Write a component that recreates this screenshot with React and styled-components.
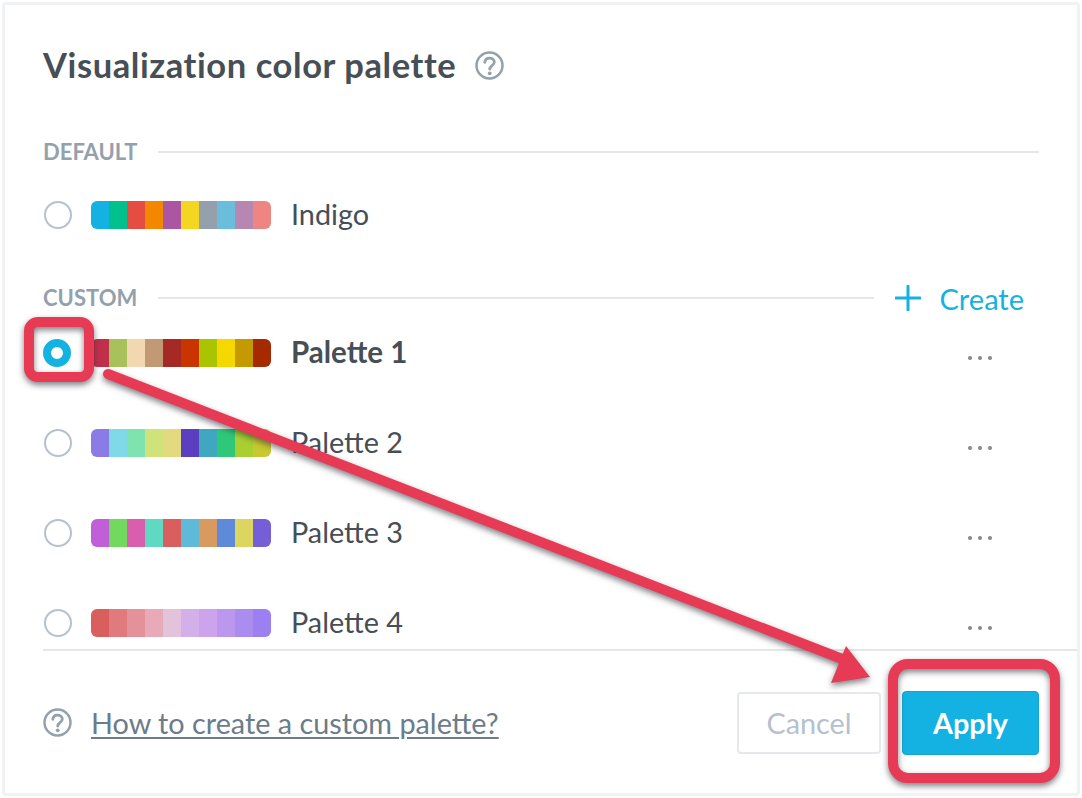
import React from 'react'
import styled, { createGlobalStyle } from 'styled-components'

const GlobalStyle = createGlobalStyle`
    html, body {
        margin: 0;
        padding: 0;
        background: #fff;
        font-family: Lato, "Open Sans", sans-serif;
    }
`

const Page = styled.div`
    position: relative;
    width: 1082px;
    height: 798px;
    overflow: hidden;
    padding: 2px 0 0 2px;
    box-sizing: border-box;
`

const Panel = styled.div`
    width: 1078px;
    height: 794px;
    box-sizing: border-box;
    border: 3px solid #f1f2f3;
    border-radius: 4px;
    padding: 38px 0 0 38px;
    color: #464e56;
`

const Body = styled.div`
    padding-right: 38px;
`

const TitleRow = styled.div`
    display: flex;
    align-items: center;
    height: 44px;
    gap: 19px;
`

const Title = styled.h1`
    margin: 0;
    font-size: 34.5px;
    font-weight: 700;
    line-height: 44px;
    letter-spacing: 0.58px;
    color: #464e56;
`

const SectionHead = styled.div`
    display: flex;
    align-items: center;
    height: 20px;
    margin-top: ${p => p.$top}px;
`

const SectionLabel = styled.span`
    font-size: 22px;
    font-weight: 700;
    color: #94a1ad;
    line-height: 20px;
`

const SectionLine = styled.span`
    flex: 1;
    height: 2px;
    margin-left: 21px;
    background: #e4e7ea;
`

const CreateLink = styled.a`
    display: flex;
    align-items: center;
    gap: 19px;
    margin: 0 15px 0 21px;
    font-size: 29px;
    color: #14b2e2;
`

const Rows = styled.div`
    display: flex;
    flex-direction: column;
    gap: 40px;
    margin-top: ${p => p.$top}px;
`

const Row = styled.div`
    display: flex;
    align-items: center;
    height: 50px;
`

const Radio = styled.span`
    width: 28px;
    height: 28px;
    box-sizing: border-box;
    border-radius: 50%;
    margin-left: ${p => (p.$checked ? 0 : 1)}px;
    margin-right: ${p => (p.$checked ? 20 : 19)}px;
    background: #fff;
    border: ${p => (p.$checked ? '8.5px solid #14b2e2' : '2px solid #b5c1cf')};
`

const Swatches = styled.div`
    display: flex;
    width: 180px;
    height: 28px;
    border-radius: 6px;
    overflow: hidden;
`

const Swatch = styled.span`
    flex: 1;
    background: ${p => p.$color};
`

const Name = styled.span`
    margin-left: 20px;
    padding-bottom: 3px;
    font-size: ${p => (p.$bold ? 29.5 : 28.8)}px;
    font-weight: ${p => (p.$bold ? 700 : 400)};
    color: #464e56;
`

const Dots = styled.div`
    display: flex;
    gap: 6px;
    margin: 10px 47px 0 auto;
`

const Dot = styled.span`
    width: 4px;
    height: 4px;
    border-radius: 50%;
    background: #83888d;
`

const Footer = styled.div`
    display: flex;
    align-items: center;
    margin-top: 1px;
    height: 143px;
    padding-right: 38px;
    border-top: 2px solid #e4e7ea;
`

const HelpLink = styled.a`
    margin-left: 19px;
    font-size: 28.8px;
    color: #6c7c89;
    text-decoration: underline;
    text-underline-offset: 3px;
`

const Actions = styled.div`
    display: flex;
    align-items: center;
    gap: 21px;
    margin-left: auto;
`

const Button = styled.button`
    box-sizing: border-box;
    width: ${p => (p.$primary ? 137 : 144)}px;
    height: ${p => (p.$primary ? 64 : 62)}px;
    border-radius: 4px;
    border: ${p => (p.$primary ? '1px solid #12a5d2' : '2px solid #e6e9ec')};
    background: ${p => (p.$primary ? '#14b2e2' : '#fff')};
    color: ${p => (p.$primary ? '#fff' : '#b5c1cf')};
    font-family: inherit;
    font-size: 28.8px;
    font-weight: ${p => (p.$primary ? 700 : 400)};
`

const Overlay = styled.svg`
    position: absolute;
    left: 0;
    top: 0;
    pointer-events: none;
    filter: drop-shadow(0 3px 3px rgba(40, 40, 50, 0.6));
`

const HelpIcon = () => (
    <svg width="29" height="29" viewBox="0 0 29 29" fill="none">
        <circle cx="14.5" cy="14.5" r="13" stroke="#94a1ad" strokeWidth="2.500" />
        <path d="M9.800 11.400c.2-2.700 2.200-4.300 4.800-4.300 2.700 0 4.700 1.600 4.700 4 0 3.600-4.400 3.500-4.600 7" stroke="#94a1ad" strokeWidth="2.800" strokeLinecap="round" />
        <circle cx="14.700" cy="22.300" r="1.900" fill="#94a1ad" />
    </svg>
)

const PlusIcon = () => (
    <svg width="26" height="26" viewBox="0 0 26 26" fill="none">
        <path d="M13 1v24M1 13h24" stroke="#14b2e2" strokeWidth="3" strokeLinecap="round" />
    </svg>
)

const custom = [
    {
        name: 'Palette 1',
        checked: true,
        colors: ['#c1304a', '#a9c15a', '#f2d7b0', '#c19a75', '#a52a26', '#c93400', '#aac400', '#f5d800', '#c49a00', '#a52a00'],
    },
    {
        name: 'Palette 2',
        colors: ['#8b7be6', '#7fd9e6', '#7fe3b0', '#cfe37a', '#e3d97f', '#5b3fc0', '#3fa8c0', '#2fc878', '#a8d030', '#c8c830'],
    },
    {
        name: 'Palette 3',
        colors: ['#c15fd9', '#72d95f', '#d95fae', '#5fd9c1', '#d95f5f', '#5fb9d9', '#d99a5f', '#5f8ad9', '#dbd65f', '#745fd9'],
    },
    {
        name: 'Palette 4',
        colors: ['#d95f5f', '#e07a7d', '#e5919a', '#e8a9b8', '#e3c3dc', '#d4b0ea', '#cba4ec', '#bb98ee', '#ab8df0', '#9b7ff3'],
    },
]

const indigo = ['#14b2e2', '#00c18d', '#e54d42', '#f38700', '#ab55a3', '#f4d521', '#94a1ad', '#6bbedb', '#b587b1', '#ef8582']

const PaletteRow = ({ name, colors, checked, more }) => (
    <Row>
        <Radio $checked={checked} />
        <Swatches>
            {colors.map((c, i) => <Swatch key={i} $color={c} />)}
        </Swatches>
        <Name $bold={checked}>{name}</Name>
        {more && (
            <Dots>
                <Dot />
                <Dot />
                <Dot />
            </Dots>
        )}
    </Row>
)

const App = () => {
    return (
        <Page>
            <GlobalStyle />
            <Panel>
                <Body>
                    <TitleRow>
                        <Title>Visualization color palette</Title>
                        <HelpIcon />
                    </TitleRow>
                    <SectionHead $top={55}>
                        <SectionLabel>DEFAULT</SectionLabel>
                        <SectionLine />
                    </SectionHead>
                    <Rows $top={28}>
                        <PaletteRow name="Indigo" colors={indigo} />
                    </Rows>
                    <SectionHead $top={48}>
                        <SectionLabel>CUSTOM</SectionLabel>
                        <SectionLine />
                        <CreateLink>
                            <PlusIcon />
                            Create
                        </CreateLink>
                    </SectionHead>
                    <Rows $top={20}>
                        {custom.map(p => <PaletteRow key={p.name} {...p} more />)}
                    </Rows>
                </Body>
                <Footer>
                    <HelpIcon />
                    <HelpLink>How to create a custom palette?</HelpLink>
                    <Actions>
                        <Button>Cancel</Button>
                        <Button $primary>Apply</Button>
                    </Actions>
                </Footer>
            </Panel>
            <Overlay width="1082" height="798" viewBox="0 0 1082 798" fill="none">
                <rect x="29" y="322" width="60" height="55" rx="9" stroke="#e73a54" strokeWidth="10" />
                <rect x="893" y="664" width="162" height="114" rx="15" stroke="#e73a54" strokeWidth="10" />
                <path d="M108 374L850 662" stroke="#e73a54" strokeWidth="10" strokeLinecap="round" />
                <path d="M870 677L846 646L831 683Z" fill="#e73a54" />
            </Overlay>
        </Page>
    )
}

export default App
